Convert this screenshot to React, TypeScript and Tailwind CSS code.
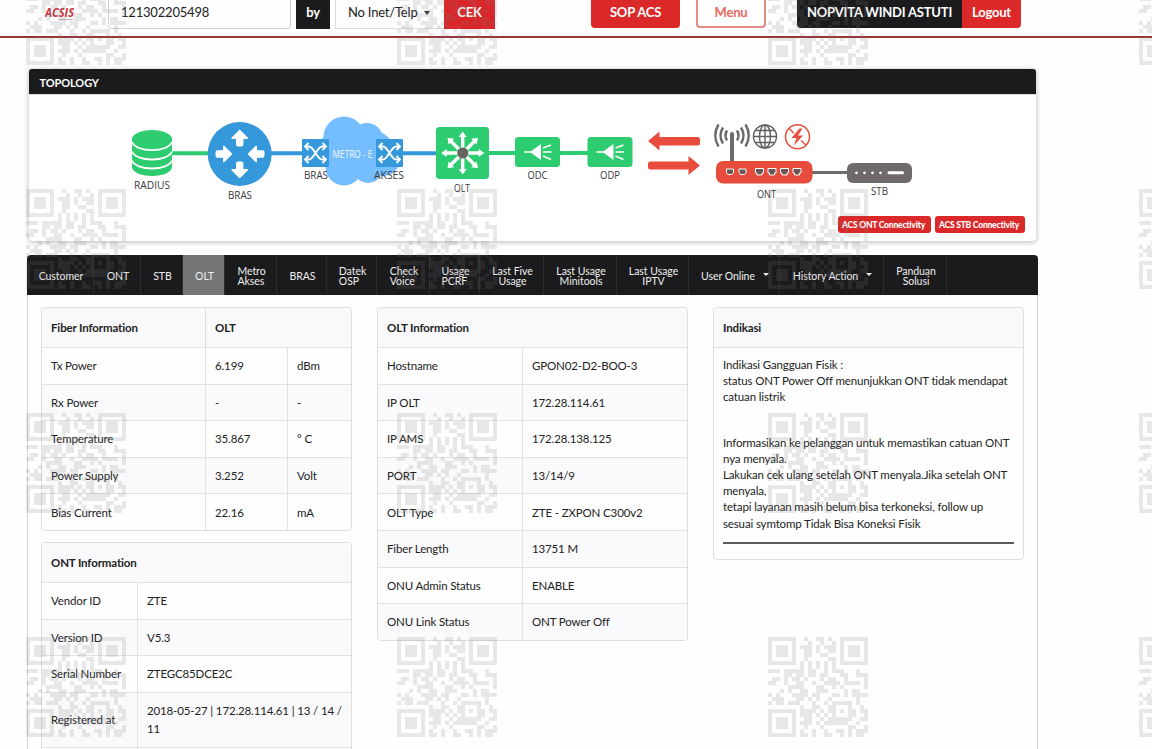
import clsx from "clsx";

const QR = [
  "#######..#..##.#..#######",
  "#.....#...#..#..#.#.....#",
  "#.###.#.###.#.###.#.###.#",
  "#.###.#..##.#..##.#.###.#",
  "#.###.#..##..##...#.###.#",
  "#.....#..#.....##.#.....#",
  "#######.#.#.#.#.#.#######",
  "........#.#.#.#.#........",
  "###.#####.##..#.###...#..",
  "....##.##.##.##...##..###",
  ".##.#.##.#...#.##..#....#",
  "##..#..##..#..####.####.#",
  ".....####...##..#.#.....#",
  "...#.#..##..###....#.##..",
  "#.#...####.##...##.#.####",
  ".###...##.#.#..#......#..",
  "#.##.###...#..#.#####.#..",
  "........#..##..##...#..#.",
  "#######.####.#.##.#.##.##",
  "#.....#.###.#.#.#...##..#",
  "#.###.#..##..#.######..##",
  "#.###.#.###.#.######..#..",
  "#.###.#..#...#......##..#",
  "#.....#.#..#..#..##.#.###",
  "#######.##.#..##..#.#.##.",
];

const qrPath = QR.map((row, y) =>
  [...row].map((c, x) => (c === "#" ? `M${x} ${y}h1v1h-1z` : "")).join("")
).join("");

function Watermark() {
  return (
    <svg
      className="absolute inset-0 z-10 pointer-events-none"
      width="1152"
      height="749"
      shapeRendering="crispEdges"
    >
      {[-35, 189, 413, 637].map((y) =>
        [26, 397, 768, 1139].map((x) => (
          <path
            key={`${x}-${y}`}
            d={qrPath}
            transform={`translate(${x} ${y}) scale(4)`}
            fill="#787878"
            fillOpacity="0.17"
          />
        ))
      )}
    </svg>
  );
}

function Header() {
  return (
    <header className="flex h-[38px] items-start border-b-2 border-[#9a3338] text-[13px] tracking-[-0.2px] text-[#222]">
      <div className="ml-[45px] flex h-[25px] w-[63px] items-center">
        <svg width="32" height="18" viewBox="0 0 32 18">
          <text
            x="0"
            y="13"
            textLength="29"
            lengthAdjust="spacingAndGlyphs"
            className="fill-[#c9343c] font-['Open_Sans'] text-[12px] font-bold italic tracking-normal"
          >
            ACSIS
          </text>
          <path d="M14 15.500h14" stroke="#c4b4b4" strokeWidth="1" />
        </svg>
      </div>
      <div className="flex h-[29px] w-[183px] items-center rounded-b border border-t-0 border-[#d0d0d2] pb-[3px] pl-3">
        121302205498
      </div>
      <div className="ml-[5px] flex h-[29px] w-[34px] items-center justify-center bg-[#1b1b1d] pb-1 font-bold text-white">
        by
      </div>
      <div className="ml-[5px] flex h-[29px] w-[109px] items-center border-b border-l border-[#dcdcde] pb-[3px] pl-3">
        No Inet/Telp
        <Caret className="ml-[7px] border-t-[#333]" />
      </div>
      <div className="flex h-[29px] w-[51px] items-center justify-center bg-[#da2628] pb-1 font-bold text-white">
        CEK
      </div>
      <div className="ml-24 flex h-7 w-[89px] items-center justify-center rounded-b bg-[#db2828] pb-[3px] font-bold text-white">
        SOP ACS
      </div>
      <div className="ml-4 flex h-7 w-[70px] items-center justify-center rounded-b border-2 border-t-0 border-[#e58a84] pb-px font-bold text-[#e8695f]">
        Menu
      </div>
      <div className="ml-[31px] flex h-7 w-[165px] items-center justify-center rounded-bl bg-[#1b1b1d] pb-[3px] font-bold text-white">
        NOPVITA WINDI ASTUTI
      </div>
      <div className="flex h-7 w-[59px] items-center justify-center rounded-br bg-[#db2828] pb-[3px] font-bold text-white">
        Logout
      </div>
    </header>
  );
}

function Caret({ className }: { className?: string }) {
  return (
    <span
      className={clsx(
        "inline-block h-0 w-0 border-x-[3.5px] border-t-4 border-x-transparent",
        className
      )}
    />
  );
}

function Label({ x, y, w, children }: { x: number; y: number; w: number; children: string }) {
  return (
    <text
      x={x}
      y={y}
      textLength={w}
      lengthAdjust="spacingAndGlyphs"
      className="fill-[#38383b] font-['Open_Sans'] text-[11px] font-medium"
    >
      {children}
    </text>
  );
}

const Shuffle = ({ x }: { x: number }) => (
  <g transform={`translate(${x} 139)`}>
    <rect width="27" height="28" rx="1" fill="#3498db" />
    <path
      d="M4 7.500H7C12 7.500 15 20.500 20 20.500H23M4 20.500H7C12 20.500 15 7.500 20 7.500H23"
      fill="none"
      stroke="#fff"
      strokeWidth="2"
    />
    <path
      d="M20.500 4l3.500 3.500l-3.500 3.500M20.500 17l3.500 3.500l-3.500 3.500M6.500 4l-3.500 3.500l3.500 3.500M6.500 17l-3.500 3.500l3.500 3.500"
      fill="none"
      stroke="#fff"
      strokeWidth="1.800"
    />
  </g>
);

const Splitter = ({ x }: { x: number }) => (
  <g transform={`translate(${x} 137)`}>
    <rect width="45" height="30" rx="3.500" fill="#2ecc71" />
    <path d="M9 15h9" stroke="#fff" strokeWidth="1.500" />
    <path d="M15 15L26 7v16z" fill="#fff" />
    <path d="M28 11l8-3M28 15h8.500M28 19l8 3.500" stroke="#fff" strokeWidth="1.500" />
  </g>
);

function Diagram() {
  return (
    <svg width="1007" height="121" viewBox="29 95 1007 121" className="block">
      <path d="M172 153.200h38M489 153h27M559 153h30" stroke="#2ecc71" strokeWidth="4" />
      <path d="M270 153.200h34M402 153.200h35" stroke="#3498db" strokeWidth="4" />
      <path d="M812 172.500h36" stroke="#6f6b6b" strokeWidth="3" />

      {/* radius */}
      <path
        d="M132 139v28c0 5 9 9 20 9s20-4 20-9v-28z"
        fill="#2ecc71"
      />
      <ellipse cx="152" cy="139" rx="20" ry="9" fill="#2ecc71" />
      <path
        d="M132 142c2 5 10 8.200 20 8.200s18-3.200 20-8.200M132 151.500c2 5 10 8 20 8s18-3 20-8M132 160.500c2 5 10 8 20 8s18-3 20-8"
        fill="none"
        stroke="#fff"
        strokeWidth="1.800"
      />
      <Label x={134} y={189} w={36}>RADIUS</Label>

      {/* bras: up and down point outwards, left and right point inwards */}
      <circle cx="239.700" cy="154" r="32" fill="#3498db" />
      {[
        "translate(239.7 129.5)",
        "translate(239.7 178.500) rotate(180)",
        "translate(232.500 154) rotate(90)",
        "translate(247.500 154) rotate(-90)",
      ].map((t) => (
        <path
          key={t}
          transform={t}
          d="M0 0l8.500 8.500q0 1-1.500 1h-3.300v5.500q0 2-2 2h-3.400q-2 0-2-2v-5.500h-3.300q-1.500 0-1.500-1z"
          fill="#fff"
        />
      ))}
      <Label x={228} y={199} w={24}>BRAS</Label>

      {/* metro cloud */}
      <g fill="#74bdff">
        <circle cx="344" cy="137" r="20.500" />
        <circle cx="367" cy="139" r="16" />
        <circle cx="338" cy="151" r="20" />
        <circle cx="374" cy="150" r="19" />
        <circle cx="344" cy="167" r="18.500" />
        <circle cx="368" cy="168" r="15" />
        <circle cx="384" cy="161" r="15" />
      </g>
      <Shuffle x={302} />
      <Shuffle x={376} />
      <text
        x="332.500"
        y="158"
        textLength="40"
        lengthAdjust="spacingAndGlyphs"
        className="fill-[#f2f9ff] font-['Open_Sans'] text-[11.5px] font-medium"
      >
        METRO - E
      </text>
      <Label x={304} y={179} w={24}>BRAS</Label>
      <Label x={374} y={179} w={30}>AKSES</Label>

      {/* olt */}
      <rect x="436" y="127" width="53" height="52" rx="3.500" fill="#2ecc71" />
      {[0, 45, 90, 135, 180, 225, 270, 315].map((a) => (
        <path
          key={a}
          transform={`rotate(${a} 462.700 153)`}
          d="M462.700 131.500l4 5.500h-2.300v11h-3.400v-11h-2.300z"
          fill="#fff"
        />
      ))}
      <circle cx="462.800" cy="153" r="5.500" fill="#68645f" />
      <Label x={454} y={192} w={16}>OLT</Label>

      <Splitter x={515} />
      <Splitter x={587.500} />
      <Label x={527.500} y={179} w={20}>ODC</Label>
      <Label x={600} y={179} w={20}>ODP</Label>

      <g fill="#e74c3c">
        <path d="M648 141l11.500-9.500v5.500h38q2.500 0 2.500 2.500v3.500q0 2.500-2.500 2.500h-38v5z" />
        <path d="M700 165.500l-11.500-9.500v5.500h-38q-2.500 0-2.500 2.500v3q0 2.500 2.500 2.500h38v5.500z" />
      </g>

      {/* ont */}
      <path d="M732 134v30" stroke="#6f6b6b" strokeWidth="4" strokeLinecap="round" />
      <path
        d="M727 130.500q-3 5 0 10M723 127.500q-5 8 0 16M718.500 124.500q-6.500 11 0 22M737 130.500q3 5 0 10M741 127.500q5 8 0 16M745.500 124.500q6.500 11 0 22"
        fill="none"
        stroke="#6f6b6b"
        strokeWidth="2.500"
      />
      <g fill="none" stroke="#625e5e" strokeWidth="1.400">
        <circle cx="765" cy="136.500" r="11.500" />
        <ellipse cx="765" cy="136.500" rx="5.500" ry="11.500" />
        <path d="M765 125v23M753.500 136.500h23M755.500 130.500h19M755.500 142.500h19" />
      </g>
      <circle cx="797.500" cy="136.800" r="12" fill="none" stroke="#e74c3c" strokeWidth="1.500" />
      <path d="M789 128.300l5 5M801 140.300l5 5" stroke="#e74c3c" strokeWidth="1.300" />
      <path d="M799.500 128.500l-8 9.500h5l-2.500 7.500 9-10h-5l4.500-7z" fill="#e74c3c" />
      <rect x="716" y="161" width="96.500" height="22.500" rx="7" fill="#e74c3c" />
      {[726.5, 739].map((x) => (
        <path key={x} d={`M${x} 169h7v3.500l-1.500 2h-4l-1.500-2z`} fill="#6b5652" stroke="#fff" />
      ))}
      {[755.5, 768, 780.5, 793].map((x) => (
        <path key={x} d={`M${x} 168.500h8v4.500h-1.500v2h-5v-2h-1.500z`} fill="#6b5652" stroke="#fff" />
      ))}
      <Label x={757} y={198} w={19}>ONT</Label>

      {/* stb */}
      <rect x="847" y="163" width="65" height="20" rx="6" fill="#6f6a69" />
      <g fill="#fff">
        <circle cx="856.500" cy="172.800" r="1.400" />
        <circle cx="864.500" cy="172.800" r="1.400" />
        <circle cx="872.500" cy="172.800" r="1.400" />
        <circle cx="880.500" cy="172.800" r="1.400" />
        <rect x="887.500" y="171.300" width="16.500" height="3" rx="1.500" />
      </g>
      <Label x={871} y={195} w={17}>STB</Label>
    </svg>
  );
}

function Topology() {
  return (
    <section className="ml-[29px] mt-[31px] h-[172px] w-[1007px] rounded bg-white shadow-[0_1px_4px_1px_#c9c9cc]">
      <h2 className="flex h-[26px] items-center rounded-t-[3px] border-b border-[#ddd] bg-[#1b1b1d] pl-[10.5px] pt-[3px] text-[11px] font-bold tracking-[-0.1px] text-white">
        TOPOLOGY
      </h2>
      <Diagram />
      <div className="flex justify-end gap-1 pr-[11px] text-[8.5px] font-black tracking-[-0.2px] text-white">
        <button className="h-[17px] w-[93px] whitespace-nowrap rounded-[3px] bg-[#db2828] pt-px pr-0.5">
          ACS ONT Connectivity
        </button>
        <button className="h-[17px] w-[90px] whitespace-nowrap rounded-[3px] bg-[#db2828] pt-px pr-0.5">
          ACS STB Connectivity
        </button>
      </div>
    </section>
  );
}

const tabs = [
  { label: ["Customer"], width: "w-[67px]" },
  { label: ["ONT"], width: "w-[47px]" },
  { label: ["STB"], width: "w-[42px]" },
  { label: ["OLT"], width: "w-[42px]", active: true },
  { label: ["Metro", "Akses"], width: "w-[52px]" },
  { label: ["BRAS"], width: "w-[50px]" },
  { label: ["Datek", "OSP"], width: "w-[50px]" },
  { label: ["Check", "Voice"], width: "w-[53px]" },
  { label: ["Usage", "PCRF"], width: "w-[50px]" },
  { label: ["Last Five", "Usage"], width: "w-[64px]", center: true },
  { label: ["Last Usage", "Minitools"], width: "w-[73px]", center: true },
  { label: ["Last Usage", "IPTV"], width: "w-[72px]", center: true },
  { label: ["User Online"], width: "w-[91px]", caret: true },
  { label: ["History Action"], width: "w-[104px]", caret: true },
  { label: ["Panduan", "Solusi"], width: "w-[63px]", center: true },
];

function Tabs() {
  return (
    <nav className="flex h-10 rounded-t bg-[#1b1b1d] text-[10.5px] leading-[10px] tracking-[-0.05px] text-[#eee]">
      {tabs.map((t, i) => (
        <div
          key={i}
          className={clsx(
            "flex shrink-0 items-center justify-center whitespace-nowrap border-r border-[#2b2b2d] pl-0.5",
            t.width,
            t.label.length > 1 ? "pt-0.5" : "pt-px",
            t.active && "bg-[#757576]",
            t.center && "text-center"
          )}
        >
          <span>
            {t.label.map((l) => (
              <span key={l} className="block">
                {l}
              </span>
            ))}
          </span>
          {t.caret && <Caret className="mb-0.5 ml-2 border-x-3 border-t-[3px] border-t-[#eee]" />}
        </div>
      ))}
    </nav>
  );
}

const fiber = [
  ["Tx Power", "6.199", "dBm"],
  ["Rx Power", "-", "-"],
  ["Temperature", "35.867", "° C"],
  ["Power Supply", "3.252", "Volt"],
  ["Bias Current", "22.16", "mA"],
];

const ont = [
  ["Vendor ID", "ZTE"],
  ["Version ID", "V5.3"],
  ["Serial Number", "ZTEGC85DCE2C"],
  ["Registered at", "2018-05-27 | 172.28.114.61 | 13 / 14 / 11"],
  ["", ""],
];

const olt = [
  ["Hostname", "GPON02-D2-BOO-3"],
  ["IP OLT", "172.28.114.61"],
  ["IP AMS", "172.28.138.125"],
  ["PORT", "13/14/9"],
  ["OLT Type", "ZTE - ZXPON C300v2"],
  ["Fiber Length", "13751 M"],
  ["ONU Admin Status", "ENABLE"],
  ["ONU Link Status", "ONT Power Off"],
];

function InfoTable({ head, rows, cols }: { head: string[]; rows: string[][]; cols: string }) {
  return (
    <div className="w-[311px] overflow-hidden rounded border border-[#dededf]">
      <div className={clsx("grid h-[39px] bg-[#f9f9fb] font-bold", head.length > 1 ? cols : "grid-cols-1")}>
        {head.map((h, i) => (
          <div
            key={h}
            className={clsx("flex items-center pl-[9px]", i > 0 && "col-span-2 border-l border-[#dededf]")}
          >
            {h}
          </div>
        ))}
      </div>
      {rows.map((row, r) => (
        <div
          key={r}
          className={clsx(
            "grid border-t border-[#e2e2e5]",
            row[1].length > 30 ? "h-[55px]" : "h-[36.600px]",
            r % 2 === 1 && "bg-[#fafafc]",
            cols
          )}
        >
          {row.map((cell, i) => (
            <div
              key={i}
              className={clsx(
                "flex items-center pl-[9px] pt-px leading-[18px]",
                i > 0 && "border-l border-[#e2e2e5] pr-2"
              )}
            >
              {cell}
            </div>
          ))}
        </div>
      ))}
    </div>
  );
}

function Indikasi() {
  return (
    <div className="h-[253px] w-[311px] rounded border border-[#dededf]">
      <h3 className="flex h-10 items-center rounded-t border-b border-[#dededf] bg-[#f9f9fb] pl-[9px] font-bold">
        Indikasi
      </h3>
      <div className="px-[9px] pt-[9px] leading-[16.200px] whitespace-nowrap">
        <p>Indikasi Gangguan Fisik :</p>
        <p>
          status ONT Power Off menunjukkan ONT tidak mendapat
          <br />
          catuan listrik
        </p>
        <p className="mt-[29px]">
          Informasikan ke pelanggan untuk memastikan catuan ONT
          <br />
          nya menyala.
          <br />
          Lakukan cek ulang setelah ONT menyala.Jika setelah ONT
          <br />
          menyala,
          <br />
          tetapi layanan masih belum bisa terkoneksi, follow up
          <br />
          sesuai symtomp Tidak Bisa Koneksi Fisik
        </p>
        <hr className="mt-2.5 border-t-2 border-[#5c5a60]" />
      </div>
    </div>
  );
}

export default function App() {
  return (
    <div className="relative h-[749px] w-[1152px] overflow-hidden bg-[#fefefe] font-['Lato',sans-serif] text-[#222]">
      <Header />
      <Topology />
      <main className="ml-[27px] mt-[14px] w-[1011px]">
        <Tabs />
        <div className="flex h-[460px] items-start gap-[25px] border-x border-[#d4d4d5] pl-[13px] pt-3 text-[11.5px] tracking-[-0.14px]">
          <div className="flex flex-col gap-[11px]">
            <InfoTable
              head={["Fiber Information", "OLT"]}
              rows={fiber}
              cols="grid-cols-[163px_82px_1fr]"
            />
            <InfoTable head={["ONT Information"]} rows={ont} cols="grid-cols-[95px_1fr]" />
          </div>
          <InfoTable head={["OLT Information"]} rows={olt} cols="grid-cols-[144px_1fr]" />
          <Indikasi />
        </div>
      </main>
      <Watermark />
    </div>
  );
}
